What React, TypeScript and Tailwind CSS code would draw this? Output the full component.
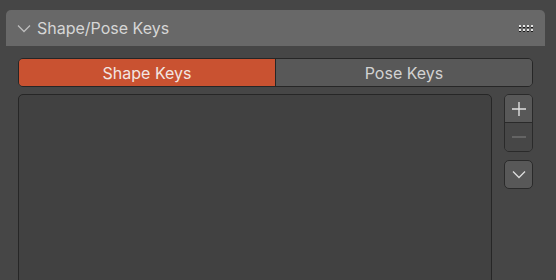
import React from 'react';

function Chevron({ className }: { className?: string }) {
  return (
    <svg width="14" height="9" viewBox="0 0 14 9" className={className}>
      <path d="M1 1.5 L7 7.5 L13 1.5" fill="none" stroke="currentColor" strokeWidth="1.3" />
    </svg>
  );
}

function Grip() {
  const cols = [0, 1, 2, 3];
  return (
    <div className="flex flex-col gap-[1px]">
      {[0, 1].map((r) => (
        <div key={r} className="flex gap-[2px]">
          {cols.map((c) => (
            <div key={c} className="flex flex-col">
              <div className="h-[2px] w-[2px] bg-[#e6e6e6]" />
              <div className="h-[1px] w-[2px] bg-[#1a1a1a]" />
            </div>
          ))}
        </div>
      ))}
    </div>
  );
}

export default function App() {
  return (
    <div
      className="h-[280px] w-[556px] overflow-hidden bg-[#464646] pl-[6px] pr-[11px] pt-[10px]"
      style={{ fontFamily: 'Inter, "Noto Sans", sans-serif' }}
    >
      <div className="flex h-[36px] items-center rounded-t-[5px] bg-[#686868] pl-[11px] pr-[12px]">
        <Chevron className="text-[#bdbdbd]" />
        <span className="ml-[6px] text-[16px] text-[#d6d6d6]">Shape/Pose Keys</span>
        <div className="ml-auto">
          <Grip />
        </div>
      </div>

      <div className="px-[12px] pt-[12px]">
        <div className="flex h-[29px] overflow-hidden rounded-[5px] border border-[#262626] text-[16px]">
          <div className="flex flex-1 items-center justify-center bg-[#c95231] text-[#f2e6e2]">
            Shape Keys
          </div>
          <div className="w-[1px] bg-[#262626]" />
          <div className="flex flex-1 items-center justify-center bg-[#585858] text-[#d2d2d2]">
            Pose Keys
          </div>
        </div>

        <div className="mt-[7px] flex gap-[12px]">
          <div className="h-[200px] w-[474px] rounded-[5px] border border-[#262626] bg-[#414141]" />
          <div className="flex w-[29px] flex-col">
            <div className="flex flex-col overflow-hidden rounded-[5px] border border-[#2a2a2a]">
              <div className="flex h-[27px] items-center justify-center bg-[#585858] text-[#e0e0e0]">
                <svg width="14" height="14" viewBox="0 0 14 14">
                  <path d="M7 0 V14 M0 7 H14" stroke="currentColor" strokeWidth="1.4" />
                </svg>
              </div>
              <div className="h-[1px] bg-[#2a2a2a]" />
              <div className="flex h-[28px] items-center justify-center bg-[#474747] text-[#6e6e6e]">
                <svg width="14" height="4" viewBox="0 0 14 4">
                  <path d="M0 2 H14" stroke="currentColor" strokeWidth="1.4" />
                </svg>
              </div>
            </div>
            <div className="mt-[8px] flex h-[29px] items-center justify-center rounded-[5px] border border-[#2a2a2a] bg-[#585858] text-[#dcdcdc]">
              <Chevron />
            </div>
          </div>
        </div>
      </div>
    </div>
  );
}
